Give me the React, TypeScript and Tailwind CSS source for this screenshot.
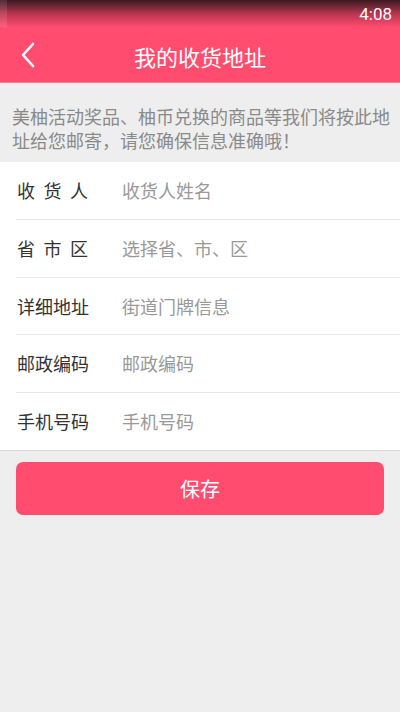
import React from "react";

const rows: { label: string; spaced?: boolean; placeholder: string; h: string }[] = [
  { label: "收货人", spaced: true, placeholder: "收货人姓名", h: "h-[57px]" },
  { label: "省市区", spaced: true, placeholder: "选择省、市、区", h: "h-[58px]" },
  { label: "详细地址", placeholder: "街道门牌信息", h: "h-[57px]" },
  { label: "邮政编码", placeholder: "邮政编码", h: "h-[58px]" },
  { label: "手机号码", placeholder: "手机号码", h: "h-[58px]" },
];

export default function App() {
  return (
    <div
      className="w-[400px] h-[712px] bg-[#eeeeee] flex flex-col"
      style={{ fontFamily: '"Noto Sans CJK SC", "Noto Sans", sans-serif' }}
    >
      {/* status bar */}
      <div className="h-[27px] flex items-stretch bg-gradient-to-b from-[#3a1822] via-[#b8344f] to-[#ff4c6f]">
        <div className="w-[7px] bg-white/10" />
        <div className="flex-1" />
        <div
          className="pr-[8px] pt-[3px] text-white text-[17px] leading-[22px]"
          style={{ fontFamily: "Roboto, sans-serif" }}
        >
          4:08
        </div>
      </div>
      {/* header */}
      <div className="h-[56px] bg-[#ff4c6f] flex items-center border-b border-[#ff7a93]">
        <div className="w-[56px] h-full flex items-center pl-[20px]">
          <svg width="16" height="26" viewBox="0 0 16 26" fill="none">
            <path d="M13 2 L3 13 L13 24" stroke="white" strokeWidth="2.6" strokeLinecap="round" strokeLinejoin="round" />
          </svg>
        </div>
        <div className="flex-1 text-center text-white text-[22px] leading-[28px] pr-[56px] pt-[3px]">
          我的收货地址
        </div>
      </div>
      {/* notice */}
      <div className="pt-[21px] pb-[10px] pl-[12px] pr-[10px] text-[18px] leading-[24px] text-[#8a8a8a]">
        美柚活动奖品、柚币兑换的商品等我们将按此地址给您邮寄，请您确保信息准确哦！
      </div>
      {/* form */}
      <div className="bg-white border-b border-[#d8d8d8]">
        {rows.map((r, i) => (
          <div
            key={r.label}
            className={`${r.h} ml-[16px] flex items-center ${i > 0 ? "border-t border-[#e8e8e8]" : ""}`}
          >
            <div className="w-[106px] text-[18px] text-[#333333] pl-[1px]">
              {r.spaced ? (
                <div className="w-[71px] flex justify-between">
                  {r.label.split("").map((c) => (
                    <span key={c}>{c}</span>
                  ))}
                </div>
              ) : (
                r.label
              )}
            </div>
            <input
              className="flex-1 min-w-0 outline-none bg-transparent text-[18px] text-[#333] placeholder:text-[#999999]"
              placeholder={r.placeholder}
            />
          </div>
        ))}
      </div>
      {/* button */}
      <div className="px-[16px] pt-[11px]">
        <button className="w-full h-[53px] rounded-[7px] bg-[#ff4c6f] text-white text-[20px]">
          保存
        </button>
      </div>
    </div>
  );
}
